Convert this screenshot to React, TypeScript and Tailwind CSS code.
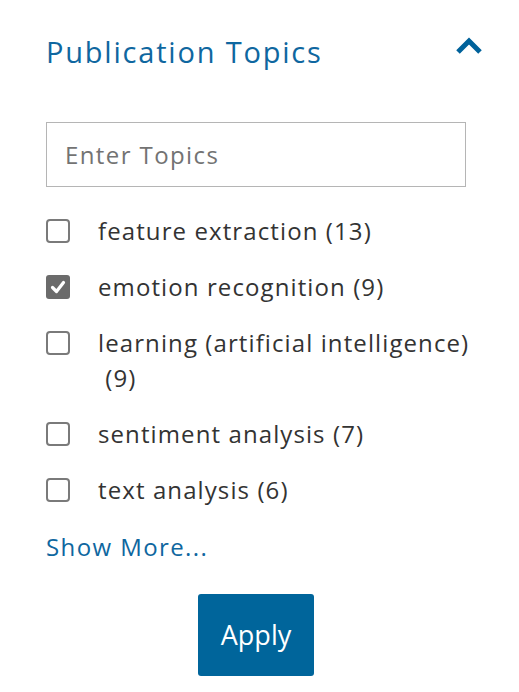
import React from "react";

const items = [
  { label: "feature extraction", count: 13, checked: false },
  { label: "emotion recognition", count: 9, checked: true },
  { label: "learning (artificial intelligence)", count: 9, checked: false },
  { label: "sentiment analysis", count: 7, checked: false },
  { label: "text analysis", count: 6, checked: false },
];

const font = { fontFamily: '"Open Sans", "Liberation Sans", sans-serif' };

function Box({ checked }: { checked: boolean }) {
  if (checked) {
    return (
      <div className="w-[24px] h-[24px] rounded-[3px] bg-[#6b6b6b] flex items-center justify-center shrink-0">
        <svg width="16" height="16" viewBox="0 0 16 16">
          <path d="M2.5 8.5 L6.5 12.5 L13.5 3.5" stroke="white" strokeWidth="3.2" fill="none" strokeLinecap="round" strokeLinejoin="round" />
        </svg>
      </div>
    );
  }
  return <div className="w-[24px] h-[24px] rounded-[4px] border-2 border-[#7a7a7a] bg-white shrink-0" />;
}

export default function App() {
  return (
    <div className="w-[519px] h-[692px] bg-white pl-[46px] pr-[53px] pt-[32px]" style={font}>
      <div className="flex items-center justify-between">
        <h2 className="text-[29px] leading-[40px] tracking-[1.8px] text-[#0f67a0]">Publication Topics</h2>
        <svg width="28" height="18" viewBox="0 0 28 18" className="mr-[-17px] mt-[-12px]">
          <path d="M3 15 L14 4 L25 15" stroke="#00629b" strokeWidth="5" fill="none" strokeLinejoin="miter" />
        </svg>
      </div>
      <div className="mt-[50px] h-[65px] border border-[#b5b5b5] flex items-center pl-[18px]">
        <span className="text-[24px] tracking-[1.4px] text-[#737373]">Enter Topics</span>
      </div>
      <div className="mt-[26px] mr-[-14px] flex flex-col gap-[21px]">
        {items.map((it) => (
          <div key={it.label} className="flex items-start">
            <div className="pt-[6px]"><Box checked={it.checked} /></div>
            <span className="ml-[28px] text-[24px] leading-[35px] tracking-[1.1px] text-[#333333]">
              <span className="whitespace-nowrap">{it.label}</span>
              <span className="inline-block whitespace-pre">{" (" + it.count + ")"}</span>
            </span>
          </div>
        ))}
      </div>
      <div className="mt-[25px] text-[24px] leading-[30px] tracking-[1.4px] text-[#0f67a0]">Show More...</div>
      <div className="flex justify-center mt-[32px]">
        <button className="w-[116px] h-[82px] rounded-[3px] bg-[#00659b] text-white text-[27px]">Apply</button>
      </div>
    </div>
  );
}
